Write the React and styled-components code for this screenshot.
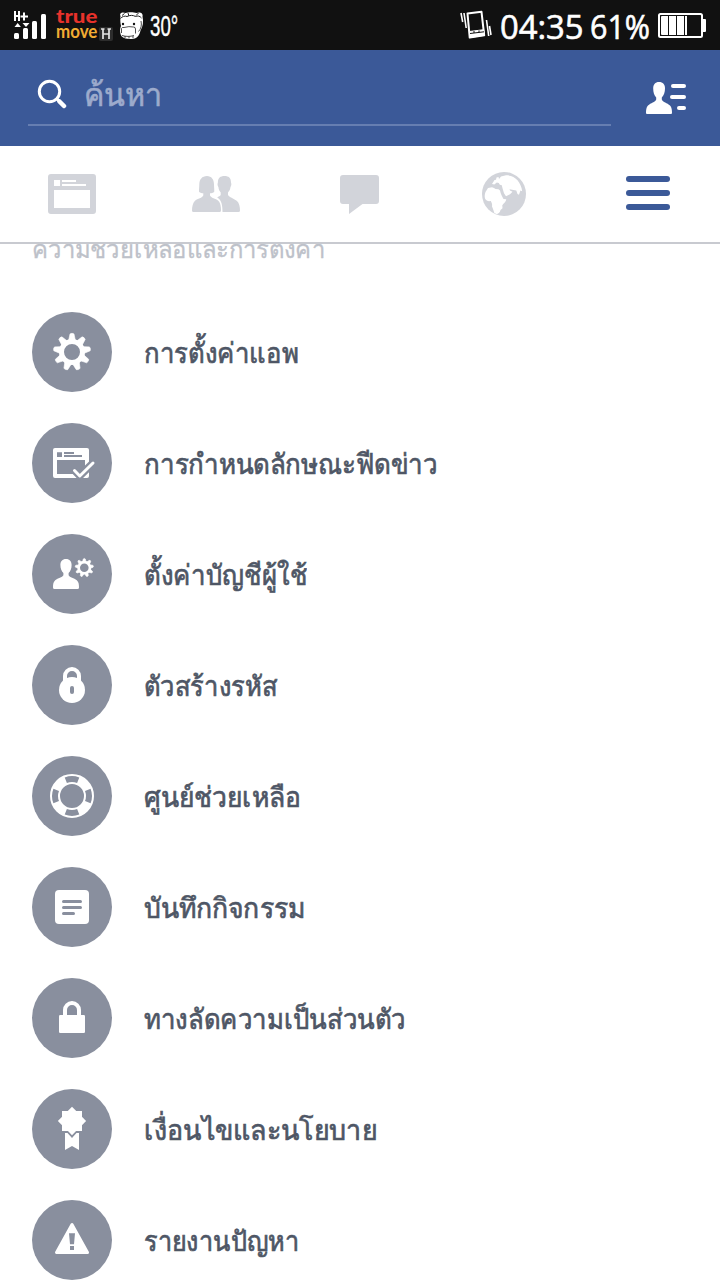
import { useLayoutEffect, useRef, useState } from "react";
import styled, { createGlobalStyle } from "styled-components";

const GlobalStyle = createGlobalStyle`
  * {
    box-sizing: border-box;
  }
  body {
    margin: 0;
    background: #fff;
    font-family: "Noto Sans", "Liberation Sans", sans-serif;
  }
  svg {
    display: block;
    flex-shrink: 0;
  }
`;

const Screen = styled.div`
  width: 720px;
  height: 1280px;
  overflow: hidden;
  display: flex;
  flex-direction: column;
  background: #fff;
`;

const StatusBar = styled.div`
  height: 50px;
  flex-shrink: 0;
  display: flex;
  align-items: center;
  justify-content: space-between;
  padding: 0 14px;
  background: #111;
  color: #fff;
`;

const StatusGroup = styled.div`
  height: 50px;
  display: flex;
  align-items: center;
`;

const Carrier = styled.div`
  display: flex;
  flex-direction: column;
  margin: 0 1px 0 10px;
  font-family: Lato, sans-serif;
  padding-bottom: 3px;
`;

const BatterySlot = styled.div`
  margin-left: 8px;
`;

const FaceSlot = styled.div`
  margin-left: 5px;
`;

const SearchBar = styled.div`
  height: 96px;
  flex-shrink: 0;
  display: flex;
  align-items: flex-start;
  justify-content: space-between;
  padding: 0 34px 0 28px;
  background: #3b5998;
`;

const SearchField = styled.div`
  width: 583px;
  height: 76px;
  display: flex;
  align-items: center;
  padding: 14px 0 0 9px;
  border-bottom: 2px solid #667eb1;
`;

const ContactsButton = styled.div`
  padding-top: 31px;
`;

const Tabs = styled.div`
  height: 98px;
  flex-shrink: 0;
  display: grid;
  grid-template-columns: repeat(5, 1fr);
  align-items: center;
  justify-items: center;
  border-bottom: 2px solid #c8cad0;
`;

const Section = styled.div`
  height: 68px;
  flex-shrink: 0;
  overflow: hidden;
  padding-left: 32px;
`;

const SectionTitle = styled.div`
  margin-top: -14px;
`;

const Menu = styled.div`
  display: flex;
  flex-direction: column;
  gap: 31px;
  padding-left: 32px;
`;

const MenuRow = styled.div`
  height: 80px;
  flex-shrink: 0;
  display: flex;
  align-items: center;
  gap: 32px;
`;

const IconCircle = styled.div`
  width: 80px;
  height: 80px;
  border-radius: 50%;
  background: #898f9e;
`;

const TextBox = styled.div`
  width: ${(p) => p.$width}px;
  height: ${(p) => p.$height}px;
  line-height: ${(p) => p.$height}px;
  margin-left: ${(p) => p.$left || 0}px;
  margin-top: ${(p) => p.$top || 0}px;
  font-size: ${(p) => p.$size}px;
  font-weight: ${(p) => p.$weight || 400};
  font-family: ${(p) => p.$font || "inherit"};
  color: ${(p) => p.$color || "inherit"};
  -webkit-text-stroke: ${(p) => p.$stroke || 0}px currentColor;
  flex-shrink: 0;
  white-space: nowrap;
`;

const TextInner = styled.span`
  display: inline-block;
  transform-origin: 0 50%;
`;

// squeezes or widens one line so that it fills its box
function FitText({ children, width, ...rest }) {
  const ref = useRef(null);
  const [scale, setScale] = useState(1);
  useLayoutEffect(() => {
    setScale(width / ref.current.offsetWidth);
  }, [width]);
  return (
    <TextBox $width={width} {...rest}>
      <TextInner ref={ref} style={{ transform: `scaleX(${scale})` }}>
        {children}
      </TextInner>
    </TextBox>
  );
}

function Signal() {
  return (
    <svg width="32" height="50" viewBox="14 0 32 50" fill="#fff">
      <path d="M14 11h2v4h2v-4h2v10h-2v-4h-2v4h-2zM23 12.500h2v3h3v2h-3v3h-2v-3h-2.500v-2H23z" />
      <path d="M14.500 27l3.200-4 3.200 4zM22.500 23h7l-3.500 4z" />
      <rect x="14" y="33" width="5" height="6" rx="1.500" />
      <rect x="23" y="28" width="5" height="11" rx="1.500" />
      <rect x="32" y="21" width="5" height="18" rx="1.500" />
      <rect x="41" y="14" width="5" height="25" rx="1.500" />
    </svg>
  );
}

function NetworkBadge() {
  return (
    <svg width="16" height="50" viewBox="98 0 16 50">
      <rect x="99" y="27" width="14" height="14" rx="2" fill="#2d2d2d" />
      <path d="M103 29v10M109 29v10M103 34h6M101 29h3.500M107.500 29h3.500" stroke="#e4e4e4" strokeWidth="1.700" fill="none" />
    </svg>
  );
}

function Face() {
  return (
    <svg width="26" height="50" viewBox="119 0 26 50">
      <path d="M120.500 16c-1.500-3 2-4.500 5-3 3-1 8-1 11 0 3-1.500 7 0 6 3.500 1.200 5 .5 10-2 14-1 5-4 8.500-9 8.500-6 0-10-1-11-5-.8-3-.5-6 .5-8-.8-3-.8-7-.500-10z" fill="#fff" />
      <path d="M120.500 18.500c1.500-2 4.500-3 6.500-2 3-1.500 6-1.500 8.500 0 2-1 4.500-.5 6 1.500M122 15.500l2.500-2M128 13l1 3M136 15.500l2.500-2.500" stroke="#222" strokeWidth="1" fill="none" />
      <path d="M121.500 33v-4.500q.5-1.500 2.500-1 5-1.500 9.500-.5 2 0 2 2v4.500M141 21c1 4 0 8-2.500 10.500M122 35.500c4 1.200 8 1.200 12 0M125 36v2M129 36.500v2M133 36v2" stroke="#222" strokeWidth=".8" fill="none" />
      <circle cx="123" cy="24" r="1.200" fill="#111" />
      <circle cx="134" cy="24" r="1.200" fill="#111" />
    </svg>
  );
}

function VibratingPhone() {
  return (
    <svg width="32" height="50" viewBox="460 0 32 50" fill="none" stroke="#fff">
      <path d="M467.500 13.500l14-1.700 2.700 23.500-14.500 2.200z" strokeWidth="2" strokeLinejoin="round" />
      <path d="M469.500 31.500l14.200-1.800.700 5.600-14.200 2.200z" fill="#fff" strokeWidth="1" />
      <path d="M474 31v2M479 30.500v2M470 33.500l14-1.700" stroke="#111" strokeWidth="1" />
      <path d="M461 13l1.700 9M464 13l2.200 15M486.500 20l2.200 16M489.500 26l1.500 9" strokeWidth="1.600" />
    </svg>
  );
}

function Battery() {
  return (
    <svg width="48" height="50" viewBox="658 0 48 50">
      <rect x="659" y="14" width="43" height="23" rx="1.500" fill="none" stroke="#fff" strokeWidth="2" />
      <path d="M703 19h2q1 0 1 1v11q0 1-1 1h-2z" fill="#fff" />
      <path d="M662 16h6v19h-6q-1 0-1-1V17q0-1 1-1zM669 16h7v19h-7zM677 16h7v19h-7zM685 16h2v19h-2z" fill="#fff" />
    </svg>
  );
}

function SearchIcon() {
  return (
    <svg width="30" height="30" viewBox="37 79 30 30" fill="none" stroke="#fff" strokeLinecap="round">
      <circle cx="49.500" cy="91.500" r="10.200" strokeWidth="3" />
      <path d="M57.500 99.500l1.500 1.500" strokeWidth="3" />
      <path d="M59.500 101.500l4.500 4.500" strokeWidth="4.500" />
    </svg>
  );
}

function ContactsIcon() {
  return (
    <svg width="40" height="34" viewBox="646 81 40 34" fill="#fff">
      <path d="M659 82c4 0 6 2.600 6 6.500 0 4-1.200 7-3.200 9v2c1 2.600 5.500 3.500 8.200 6 1.800 1.800 2 5 2 7.500q0 1-1 1h-24q-1 0-1-1c0-2.500.200-5.700 2-7.500 2.700-2.500 7.200-3.400 8.200-6v-2c-2-2-3-5-3-9 0-3.900 2-6.500 5.800-6.500z" />
      <rect x="671" y="84" width="15" height="4" rx="2" />
      <rect x="670" y="95" width="16" height="4" rx="2" />
      <rect x="677" y="106" width="9" height="4" rx="2" />
    </svg>
  );
}

function FeedTab() {
  return (
    <svg width="48" height="96" viewBox="48 146 48 96">
      <path fillRule="evenodd" fill="#d2d4da" d="M51 174h42q3 0 3 3v34q0 3-3 3H51q-3 0-3-3v-34q0-3 3-3zM54 180v6h6v-6zM62 180v2h14v-2zM62 184v2h24v-2zM54 190v18h36v-18z" />
    </svg>
  );
}

function FriendsTab() {
  return (
    <svg width="48" height="96" viewBox="192 146 48 96" fill="#d2d4da">
      <path d="M207 176c4.500 0 7 3.500 7 8.500 0 3 .5 5 .2 7.500-1.200 1-2.800 1.200-4.200 1.300v2.200c1 2.500 5.500 2.800 8.500 5.500 2 2 2.500 6 2.500 9.500q0 1.500-1.500 1.500h-26q-1.500 0-1.500-1.500c0-3.500.8-7.500 2.800-9.500 3-2.700 7.500-3 8.500-5.500v-2.200c-1.400-.100-3-.300-4.200-1.300-.3-2.500.2-4.500.2-7.500 0-5 2.700-8.500 7.700-8.500z" />
      <path d="M224.500 176c4.200 0 6.500 2 6.500 6.500.7 1.500.300 3.500-.500 4.500-.3 2.500-1.200 4-2.500 5.500v2.500c1.300 2.200 5.500 3.300 8.700 5.800 2.500 2 3.300 6 3.300 9.700q0 1.500-1.500 1.500h-16c0-7-1-11.500-4.500-14l-.8-.7c1.500-.8 2.800-1.300 3.500-2.300v-2.500c-1.300-1.500-2-3-2.300-5.500-.8-1-1.200-3-.5-4.500 0-4.500 2.400-6.500 6.600-6.500z" />
    </svg>
  );
}

function MessagesTab() {
  return (
    <svg width="40" height="96" viewBox="340 146 40 96" fill="#d2d4da">
      <path d="M343 175h33q3 0 3 3v23q0 3-3 3h-13.500L349 214v-10h-6q-3 0-3-3v-23q0-3 3-3z" />
    </svg>
  );
}

function GlobeTab() {
  return (
    <svg width="44" height="96" viewBox="482 146 44 96">
      <circle cx="504" cy="194" r="22" fill="#d2d4da" />
      <path d="M488 188l4-.8 2 .8 1.500 1 3 .200 1.500 1.300c.7 3.500 2 5.500 3.500 8.500l2.800.3c-.3 2.500-2.500 4-4 6l.2 3-2 1.700c-.5 2.500-2 3.800-4 4l-2.200-1c-.9-3-1.300-4.500-2.300-6.500.5-2.500-.4-3.500-1.200-5.500-2 .4-4.500.3-5.800-2.500-.6-2.500-.2-4.500.5-6.500z" fill="#fff" />
      <path d="M492 184l2.500-4 1.500-.2.500-2.300 2-.500.5 2 2-2.500 5-1.200c5.500 0 8.500 1.500 11.500 5 2.500 3 4.300 7 4.700 11l-1.800-.8-1.400 4.300-1.500-.8-1.200-3.500-2.800-.5-4-.7.500 1.200 2.500 1.200-2.500 2.500-4 2-2-3-1.500-5-.7-3-2-.500-1-1.700-2-.500-2.500 2z" fill="#fff" />
    </svg>
  );
}

function MenuTab() {
  return (
    <svg width="44" height="96" viewBox="626 146 44 96" fill="#3b5998">
      <rect x="626" y="176" width="44" height="6" rx="3" />
      <rect x="626" y="190" width="44" height="6" rx="3" />
      <rect x="626" y="204" width="44" height="6" rx="3" />
    </svg>
  );
}

const GREY = "#898f9e";

function Gear({ cx, cy, outer, body, hole, tooth }) {
  const teeth = [0, 1, 2, 3, 4, 5, 6, 7, 8];
  return (
    <g transform={`translate(${cx} ${cy})`}>
      <circle r={(body + hole) / 2} fill="none" stroke="#fff" strokeWidth={body - hole} />
      {teeth.map((t) => (
        <path
          key={t}
          transform={`rotate(${t * 40})`}
          d={`M${-tooth} ${-body + 1}L${-tooth * 0.6} ${-outer + 0.6}Q0 ${-outer - 0.6} ${tooth * 0.6} ${-outer + 0.6}L${tooth} ${-body + 1}z`}
          fill="#fff"
          stroke="#fff"
          strokeWidth=".6"
          strokeLinejoin="round"
        />
      ))}
    </g>
  );
}

const icons = {
  settings: <Gear cx={40} cy={40} outer={18.700} body={13} hole={8} tooth={3.300} />,
  feed: (
    <>
      <path fillRule="evenodd" d="M23 25h32q2 0 2 2v26q0 2-2 2H23q-2 0-2-2V27q0-2 2-2zM25 37v14h28V37z" />
      <path fill={GREY} d="M25 29.300h5v4.700h-5zM32 29h10v2H32zM32 32h18v2H32z" />
      <path d="M42.500 47.500l5.300 5.500 13.200-13" fill="none" stroke={GREY} strokeWidth="7.500" />
      <path d="M42.500 47.500l5.300 5.500 13.200-13" fill="none" stroke="#fff" strokeWidth="3" strokeLinecap="round" strokeLinejoin="round" />
    </>
  ),
  account: (
    <>
      <path d="M34 25c3.700 0 5.600 2.400 5.600 6 0 3.500-1 6-3 8v2.300c1.200 2.200 5.400 2.700 8.200 5 1.900 1.600 2.200 4.200 2.200 7.200q0 1.500-1.500 1.500h-23q-1.500 0-1.500-1.500c0-3 .3-5.600 2.200-7.200 2.800-2.300 7-2.800 8.200-5V39c-2-2-3-4.500-3-8 0-3.600 1.900-6 5.600-6z" />
      <Gear cx={52.300} cy={33.700} outer={9.300} body={6.900} hole={4.300} tooth={1.700} />
    </>
  ),
  code: (
    <>
      <path d="M33 39v-8a7 7 0 0 1 14 0v8" fill="none" stroke="#fff" strokeWidth="4" />
      <circle cx="40" cy="45" r="13" />
      <rect x="38" y="41" width="4" height="8" rx="2" fill={GREY} />
    </>
  ),
  help: (
    <>
      <circle cx="40" cy="40" r="17" fill="none" stroke="#fff" strokeWidth="10" />
      {[0, 90, 180, 270].map((a) => (
        <path key={a} transform={`rotate(${a} 40 40)`} d="M33.800 24.200A17 17 0 0 1 46.200 24.200" fill="none" stroke={GREY} strokeWidth="6" />
      ))}
    </>
  ),
  log: (
    <>
      <rect x="23" y="23" width="34" height="34" rx="4" />
      <path d="M31.500 34.500h17M31.500 40.500h17M31.500 46.500h10" fill="none" stroke={GREY} strokeWidth="3" strokeLinecap="round" />
    </>
  ),
  privacy: (
    <>
      <path d="M33 38v-6a7 7 0 0 1 14 0v6" fill="none" stroke="#fff" strokeWidth="4" />
      <rect x="27" y="37" width="26" height="18" rx="1.300" />
    </>
  ),
  terms: (
    <>
      <rect x="30" y="22" width="20" height="20" />
      <rect x="30" y="22" width="20" height="20" transform="rotate(45 40 32)" />
      <path d="M33 44h2.500l4.500 5 4.500-5H47V61l-7-4-7 4z" stroke={GREY} strokeWidth="3" paintOrder="stroke" />
    </>
  ),
  report: (
    <>
      <path d="M40 24.500L24.500 52.500h31z" stroke="#fff" strokeWidth="3" strokeLinejoin="round" />
      <path fill={GREY} d="M37 33.300h6l-1 11h-4zM38 46h4v4h-4z" />
    </>
  ),
};

const items = [
  { icon: "settings", label: "การตั้งค่าแอพ", width: 154 },
  { icon: "feed", label: "การกำหนดลักษณะฟีดข่าว", width: 294 },
  { icon: "account", label: "ตั้งค่าบัญชีผู้ใช้", width: 163 },
  { icon: "code", label: "ตัวสร้างรหัส", width: 133 },
  { icon: "help", label: "ศูนย์ช่วยเหลือ", width: 157 },
  { icon: "log", label: "บันทึกกิจกรรม", width: 161 },
  { icon: "privacy", label: "ทางลัดความเป็นส่วนตัว", width: 262 },
  { icon: "terms", label: "เงื่อนไขและนโยบาย", width: 233 },
  { icon: "report", label: "รายงานปัญหา", width: 155 },
];

export default function App() {
  return (
    <>
      <GlobalStyle />
      <Screen>
        <StatusBar>
          <StatusGroup>
            <Signal />
            <Carrier>
              <FitText width={41} $height={15} $size={19} $weight={900} $color="#e8322b">true</FitText>
              <FitText width={41} $height={16} $size={19} $weight={700} $color="#f2ac33">move</FitText>
            </Carrier>
            <NetworkBadge />
            <FaceSlot>
              <Face />
            </FaceSlot>
            <FitText width={28} $height={32} $size={30} $left={5} $top={2} $stroke={0.4} $font="'Liberation Sans', sans-serif">30°</FitText>
          </StatusGroup>
          <StatusGroup>
            <VibratingPhone />
            <FitText width={84} $height={36} $size={32} $left={8} $top={3} $stroke={0.6} $font="'Open Sans', sans-serif">04:35</FitText>
            <FitText width={60} $height={36} $size={32} $left={6} $top={3} $stroke={0.6} $font="'Open Sans', sans-serif">61%</FitText>
            <BatterySlot>
              <Battery />
            </BatterySlot>
          </StatusGroup>
        </StatusBar>
        <SearchBar>
          <SearchField>
            <SearchIcon />
            <FitText width={78} $height={36} $size={32} $left={17} $stroke={0.6} $color="#9dabcc">ค้นหา</FitText>
          </SearchField>
          <ContactsButton>
            <ContactsIcon />
          </ContactsButton>
        </SearchBar>
        <Tabs>
          <FeedTab />
          <FriendsTab />
          <MessagesTab />
          <GlobeTab />
          <MenuTab />
        </Tabs>
        <Section>
          <SectionTitle>
            <FitText width={293} $height={36} $size={25} $stroke={0.3} $color="#bdc1c9">ความช่วยเหลือและการตั้งค่า</FitText>
          </SectionTitle>
        </Section>
        <Menu>
          {items.map((item) => (
            <MenuRow key={item.icon}>
              <IconCircle>
                <svg width="80" height="80" viewBox="0 0 80 80" fill="#fff">
                  {icons[item.icon]}
                </svg>
              </IconCircle>
              <FitText width={item.width} $height={40} $size={28} $weight={500} $stroke={0.7} $color="#4e5665">
                {item.label}
              </FitText>
            </MenuRow>
          ))}
        </Menu>
      </Screen>
    </>
  );
}
